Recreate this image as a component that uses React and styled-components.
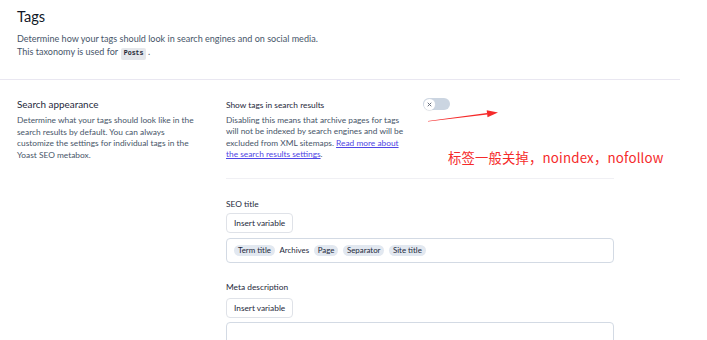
import React from "react";
import styled, { createGlobalStyle } from "styled-components";

const Global = createGlobalStyle`
  html, body { margin: 0; padding: 0; background: #ffffff; }
  body { font-family: Lato, "Noto Sans CJK SC", sans-serif; color: #1e293b; }
  * { box-sizing: border-box; }
`;

const Page = styled.div`
  position: relative;
  width: 680px;
  height: 340px;
  overflow: hidden;
`;

const Header = styled.header`
  padding: 5px 17px 19px;
  border-bottom: 1px solid #e9e7f1;
`;

const Title = styled.h1`
  margin: 0;
  font-size: 14.6px;
  line-height: 24px;
  font-weight: 400;
  color: #111827;
`;

const Lead = styled.p`
  margin: 3px 0 0;
  font-size: 9.05px;
  line-height: 13px;
  color: #475569;
`;

const Code = styled.code`
  display: inline-block;
  font-family: "Liberation Mono", monospace;
  font-size: 6.6px;
  line-height: 8px;
  padding: 2px 2.5px;
  margin: 0 2px 0 1px;
  border-radius: 2px;
  background: #e5e7eb;
  color: #1f2937;
  font-weight: 700;
`;

const Section = styled.section`
  display: grid;
  grid-template-columns: 182px 388px;
  column-gap: 27px;
  padding: 18px 17px 0;
`;

const Aside = styled.div``;

const Heading = styled.h2`
  margin: 0 0 5px;
  font-size: 9.9px;
  line-height: 12px;
  font-weight: 400;
  color: #1e293b;
`;

const Desc = styled.p`
  margin: ${(p) => p.$mt || 0}px 0 0;
  font-size: 8.35px;
  line-height: 11.6px;
  color: #475569;
`;

const Link = styled.a`
  color: #4f46e5;
  text-decoration: underline;
`;

const Fields = styled.div`
  display: flex;
  flex-direction: column;
`;

const ToggleField = styled.div`
  display: flex;
  align-items: flex-start;
  gap: 16px;
`;

const ToggleText = styled.div`
  width: 181px;
`;

const Label = styled.div`
  font-size: 8.35px;
  line-height: 14px;
  color: #1e293b;
`;

const Switch = styled.div`
  flex: none;
  width: 27px;
  height: 12px;
  border-radius: 6px;
  background: #cbd5e1;
  display: flex;
  align-items: center;
  padding: 0 0.5px;
`;

const Knob = styled.div`
  width: 11px;
  height: 11px;
  border-radius: 50%;
  background: #ffffff;
  box-shadow: 0 0 0 0.5px #d7dde6, 0 1px 1px rgba(0, 0, 0, 0.08);
  display: flex;
  align-items: center;
  justify-content: center;
`;

const Divider = styled.hr`
  border: 0;
  border-top: 1px solid #f0f0f4;
  margin: 17px 0 0;
  width: 388px;
`;

const Field = styled.div`
  display: flex;
  flex-direction: column;
  align-items: flex-start;
  margin-top: ${(p) => p.$mt}px;
`;

const Button = styled.button`
  margin-top: ${(p) => p.$mt}px;
  height: 20px;
  padding: 0 7px;
  border: 1px solid #dfe2e8;
  border-radius: 4px;
  background: #ffffff;
  font-family: Lato, sans-serif;
  font-size: 8.3px;
  color: #1e293b;
  display: flex;
  align-items: center;
`;

const InputBox = styled.div`
  margin-top: ${(p) => p.$mt}px;
  width: 388px;
  height: ${(p) => p.$h}px;
  border: 1px solid #d3dae4;
  border-radius: 4px;
  background: #ffffff;
  display: flex;
  align-items: ${(p) => (p.$top ? "flex-start" : "center")};
  gap: 4.5px;
  padding: 0 7px;
  color: #1e293b;
`;

const Chip = styled.span`
  display: inline-flex;
  align-items: center;
  height: 11px;
  padding: 0 4px;
  border-radius: 6px;
  background: #e2e8f0;
  font-size: 7.9px;
  color: #1e293b;
`;

const Plain = styled.span`
  font-size: 7.9px;
`;

const Arrow = styled.svg`
  position: absolute;
  left: 0;
  top: 0;
  pointer-events: none;
`;

const Note = styled.div`
  position: absolute;
  left: 448px;
  top: 149px;
  font-family: "Noto Sans CJK SC", sans-serif;
  font-size: 13.3px;
  letter-spacing: 0.2px;
  line-height: 18px;
  color: #f52a2a;
  white-space: nowrap;
`;

export default function App() {
  return (
    <>
      <Global />
      <Page>
        <Header>
          <Title>Tags</Title>
          <Lead>
            Determine how your tags should look in search engines and on social media.
            <br />
            This taxonomy is used for <Code>Posts</Code>.
          </Lead>
        </Header>
        <Section>
          <Aside>
            <Heading>Search appearance</Heading>
            <Desc>
              Determine what your tags should look like in the search results by default. You can
              always customize the settings for individual tags in the Yoast SEO metabox.
            </Desc>
          </Aside>
          <Fields>
            <ToggleField>
              <ToggleText>
                <Label>Show tags in search results</Label>
                <Desc $mt={2.5}>
                  Disabling this means that archive pages for tags will not be indexed by search
                  engines and will be excluded from XML sitemaps.{" "}
                  <Link href="#">Read more about the search results settings</Link>.
                </Desc>
              </ToggleText>
              <Switch>
                <Knob>
                  <svg width="5" height="5" viewBox="0 0 10 10">
                    <path d="M2 2 L8 8 M8 2 L2 8" stroke="#6b7280" strokeWidth="2" strokeLinecap="round" />
                  </svg>
                </Knob>
              </Switch>
            </ToggleField>
            <Divider />
            <Field $mt={18}>
              <Label>SEO title</Label>
              <Button $mt={2}>Insert variable</Button>
              <InputBox $mt={5} $h={25}>
                <Chip>Term title</Chip>
                <Plain>Archives</Plain>
                <Chip>Page</Chip>
                <Chip>Separator</Chip>
                <Chip>Site title</Chip>
              </InputBox>
            </Field>
            <Field $mt={16.7}>
              <Label>Meta description</Label>
              <Button $mt={4}>Insert variable</Button>
              <InputBox $mt={4.3} $h={60} $top />
            </Field>
          </Fields>
        </Section>
        <Arrow width="680" height="340">
          <polygon points="428,120.9 487,113 487.3,114.6 428,121.4" fill="#f52a2a" />
          <polygon points="498,112.5 486.7,110.3 487.5,117.2" fill="#f52a2a" />
        </Arrow>
        <Note>标签一般关掉，noindex，nofollow</Note>
      </Page>
    </>
  );
}
